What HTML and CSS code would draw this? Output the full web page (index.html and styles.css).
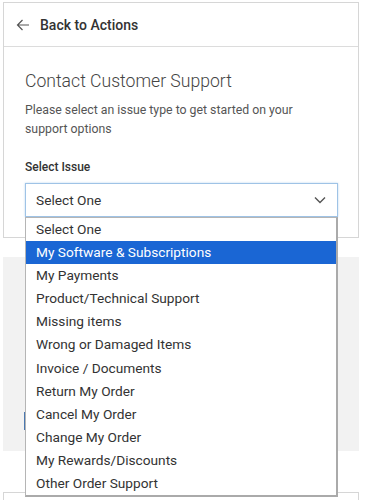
FILE: index.html
```html
<!DOCTYPE html>
<html>
<head>
<meta charset="utf-8">
<link rel="stylesheet" href="styles.css">
</head>
<body>
<div class="card">
  <div class="card-header">
    <svg class="back-icon" width="14" height="14" viewBox="0 0 14 14"><path d="M13 7H1.5M6.5 2L1.5 7l5 5" fill="none" stroke="#555" stroke-width="1.2"/></svg>
    <span class="back-text">Back to Actions</span>
  </div>
  <div class="card-body">
    <h1 class="title">Contact Customer Support</h1>
    <p class="desc">Please select an issue type to get started on your support options</p>
    <div class="label">Select Issue</div>
    <div class="select-wrap">
      <div class="select">
        <span>Select One</span>
        <svg width="14" height="10" viewBox="0 0 14 10"><path d="M2 2.5l5 5 5-5" fill="none" stroke="#555" stroke-width="1.4"/></svg>
      </div>
      <ul class="listbox">
        <li>Select One</li>
        <li class="active">My Software &amp; Subscriptions</li>
        <li>My Payments</li>
        <li>Product/Technical Support</li>
        <li>Missing items</li>
        <li>Wrong or Damaged Items</li>
        <li>Invoice / Documents</li>
        <li>Return My Order</li>
        <li>Cancel My Order</li>
        <li>Change My Order</li>
        <li>My Rewards/Discounts</li>
        <li>Other Order Support</li>
      </ul>
    </div>
  </div>
</div>
<div class="gray">
  <div class="gray-btn"></div>
</div>
<div class="card next"></div>
</body>
</html>
```
FILE: styles.css
```css
* { box-sizing: border-box; }
html, body { overflow: hidden; }
body {
  margin: 0;
  background: #fff;
  font-family: Roboto, "Noto Sans", Arial, sans-serif;
  color: #333;
}
.card {
  margin: 2px 0 0 3px;
  width: 356px;
  border: 1px solid #d6d6d6;
  background: #fff;
}
.card-header {
  height: 44px;
  border-bottom: 1px solid #dcdcdc;
  display: flex;
  align-items: center;
  padding-left: 12px;
}
.back-icon { margin-right: 10px; }
.back-text {
  font-size: 14px;
  font-weight: 500;
  color: #333;
}
.card-body {
  padding: 22px 20px 20px 21px;
}
.title {
  margin: 0;
  font-size: 17.6px;
  font-weight: 300;
  color: #444;
  line-height: 24px;
}
.desc {
  margin: 8px 0 0;
  font-size: 12.3px;
  line-height: 19px;
  color: #555;
  width: 290px;
}
.label {
  margin-top: 20px;
  font-size: 12px;
  font-weight: 500;
  color: #333;
  line-height: 16px;
}
.select-wrap {
  position: relative;
  margin-top: 8px;
  width: 313px;
}
.select {
  height: 34px;
  border: 1px solid #9fc3e6;
  box-shadow: 0 0 2px #bcd6ef;
  display: flex;
  align-items: center;
  justify-content: space-between;
  padding: 0 10px 0 10px;
  font-size: 13.7px;
  color: #333;
}
.listbox {
  position: absolute;
  top: 34px;
  left: 0;
  width: 313px;
  margin: 0;
  padding: 0;
  list-style: none;
  background: #fff;
  border: 1px solid #b5b5b5;
  border-right: 2px solid #aaa;
  border-bottom: 2px solid #aaa;
  z-index: 2;
}
.listbox li {
  height: 23.1px;
  line-height: 23px;
  padding-left: 10px;
  font-size: 13.7px;
  color: #333;
}
.listbox li.active {
  background: #1a66d4;
  color: #fff;
}
.gray {
  margin: 19px 0 0 3px;
  width: 356px;
  height: 194px;
  background: #f2f2f2;
  padding: 155px 0 0 21px;
}
.gray-btn {
  width: 60px;
  height: 18px;
  background: #4a78b0;
}
.next {
  margin-top: 41px;
  height: 10px;
}
```
